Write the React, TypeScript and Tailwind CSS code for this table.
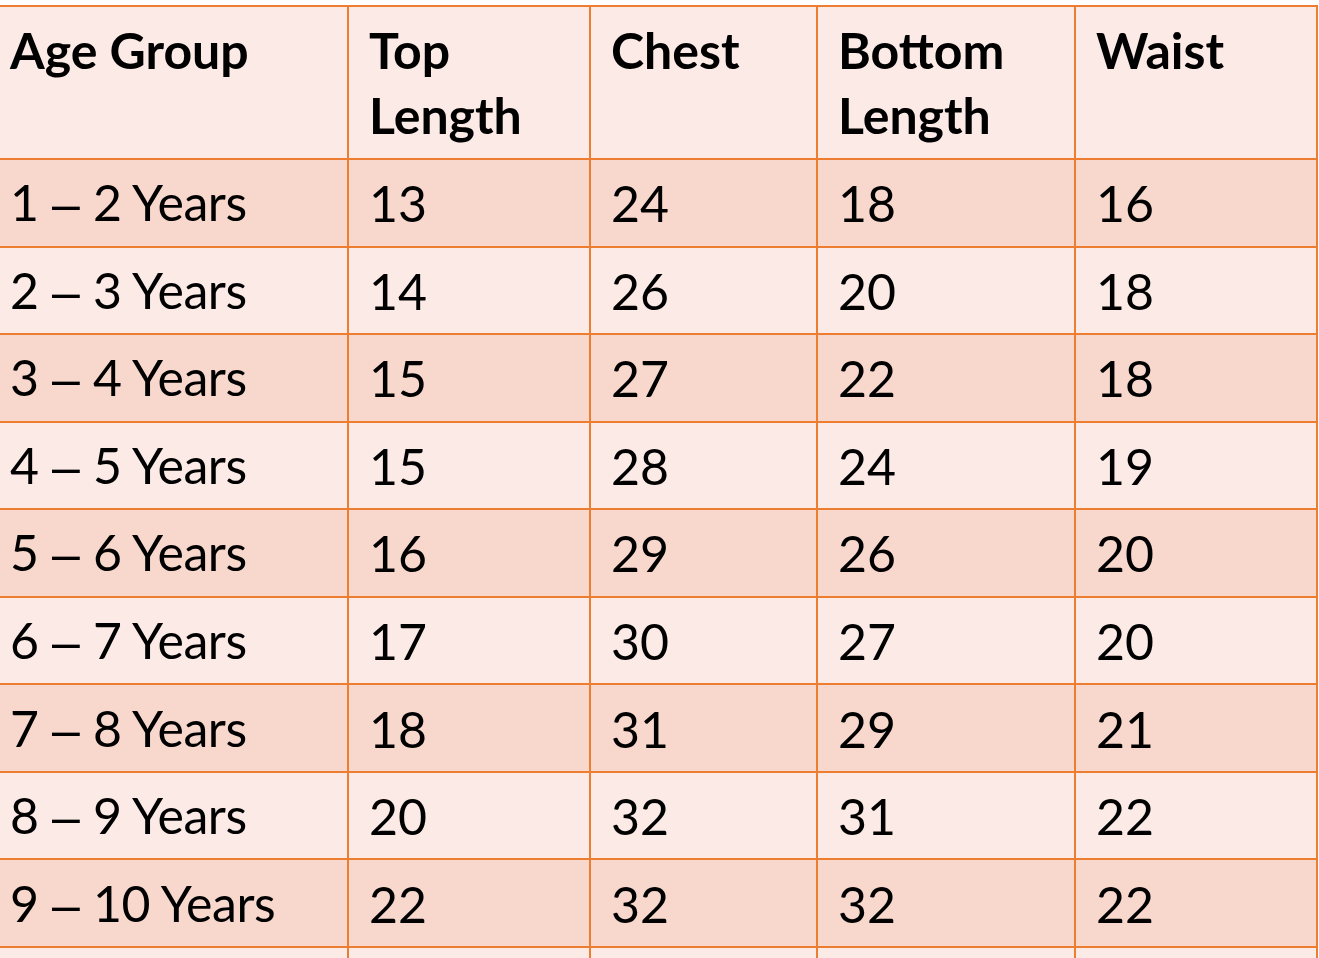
const rows = [
  ['1', '2', '13', '24', '18', '16'],
  ['2', '3', '14', '26', '20', '18'],
  ['3', '4', '15', '27', '22', '18'],
  ['4', '5', '15', '28', '24', '19'],
  ['5', '6', '16', '29', '26', '20'],
  ['6', '7', '17', '30', '27', '20'],
  ['7', '8', '18', '31', '29', '21'],
  ['8', '9', '20', '32', '31', '22'],
  ['9', '10', '22', '32', '32', '22'],
];

const grid = 'grid grid-cols-[349px_242px_227px_258px_242px] border-b-2 border-[#ED7D31]';

function Cell({ children, first, bold }: { children?: React.ReactNode; first?: boolean; bold?: boolean }) {
  return (
    <div
      className={`border-r-2 border-[#ED7D31] flex items-center ${first ? 'pl-[10px]' : 'pl-[20px]'} ${bold ? 'font-bold items-start pt-[11px]' : 'pt-[2px]'}`}
    >
      <span className="leading-[65px] whitespace-pre">{children}</span>
    </div>
  );
}

export default function App() {
  return (
    <div className="min-h-screen bg-white pt-[5px] text-black text-[50px] font-['Lato',sans-serif]">
      <div className="w-[1318px] border-t-2 border-[#ED7D31]">
        {/* header */}
        <div className={`${grid} h-[153px] bg-[#FBEAE6]`}>
          <Cell first bold>Age Group</Cell>
          <Cell bold>Top<br />Length</Cell>
          <Cell bold>Chest</Cell>
          <Cell bold>Bottom<br />Length</Cell>
          <Cell bold>Waist</Cell>
        </div>

        {rows.map((r, i) => (
          <div key={i} className={`${grid} h-[87.56px] ${i % 2 === 0 ? 'bg-[#F8D7CD]' : 'bg-[#FBEAE6]'}`}>
            <Cell first>
              <span className="tracking-[-0.4px]">
                {r[0]}
                <span className="font-['Liberation_Sans',sans-serif]"> – </span>
                {r[1]} Years
              </span>
            </Cell>
            <Cell>{r[2]}</Cell>
            <Cell>{r[3]}</Cell>
            <Cell>{r[4]}</Cell>
            <Cell>{r[5]}</Cell>
          </div>
        ))}

        {/* next row, cut off by the frame */}
        <div className={`${grid} h-[87.56px] bg-[#FBEAE6]`}>
          <Cell first />
          <Cell />
          <Cell />
          <Cell />
          <Cell />
        </div>
      </div>
    </div>
  );
}
